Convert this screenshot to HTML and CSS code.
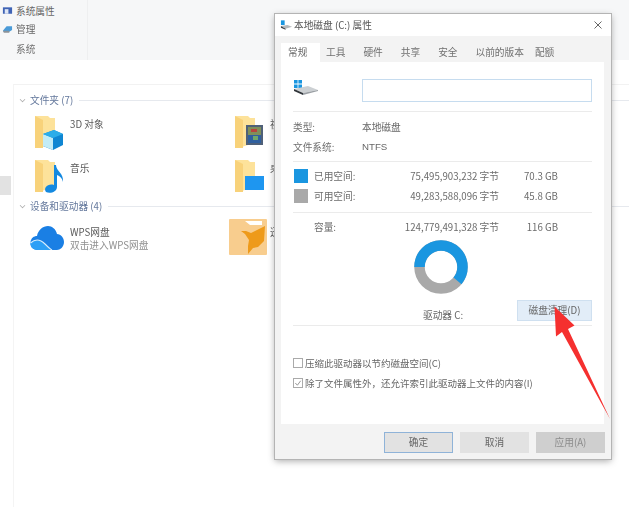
FILE: index.html

```html
<!DOCTYPE html>
<html lang="zh-CN">
<head>
    <meta charset="UTF-8">
    <meta name="viewport" content="width=device-width, initial-scale=1.0">
    <title>本地磁盘 (C:) 属性</title>
    <link rel="stylesheet" href="styles.css">
</head>
<body>
    <div class="screen">
        <!-- 资源管理器 -->
        <div class="ribbon">
            <div class="ribbon-group">
                <div class="ribbon-item">
                    <svg class="ribbon-icon" viewBox="0 0 12 10"><rect x="1" y="1" width="10" height="7" fill="#3f63b5"/><rect x="3" y="3" width="4" height="5" fill="#dfe7f5"/></svg>
                    <span>系统属性</span>
                </div>
                <div class="ribbon-item">
                    <svg class="ribbon-icon" viewBox="0 0 12 10"><path d="M1 7 L5 2 H11 V6 L8 8 H2 Z" fill="#4a9bd8"/><path d="M1 7 H8 V9 H2 Z" fill="#8b9299"/></svg>
                    <span>管理</span>
                </div>
                <div class="ribbon-title">系统</div>
            </div>
        </div>

        <div class="content">
            <div class="group-head">
                <span class="chevron"></span>
                <span class="group-name">文件夹 (7)</span>
                <span class="group-line"></span>
            </div>
            <div class="item-grid">
                <div class="item">
                    <svg class="item-icon" viewBox="0 0 32 36">
                        <path d="M0 1 H13 L15 3 H20 V28 L3 33 H0 Z" fill="#fde29a"/>
                        <path d="M0 1 L8 5 V33 H0 Z" fill="#f8d27a"/>
                        <path d="M8 19 L19 15 L28 19 V30 L18 35 L8 31 Z" fill="#0f86d2"/>
                        <path d="M8 19 L18 23 V35 L8 31 Z" fill="#c3ecf6"/>
                        <path d="M8 19 L19 15 L28 19 L18 23 Z" fill="#2cade9"/>
                    </svg>
                    <span class="item-label">3D 对象</span>
                </div>
                <div class="item">
                    <svg class="item-icon" viewBox="0 0 32 36">
                        <path d="M0 1 H13 L15 3 H20 V28 L3 33 H0 Z" fill="#fde29a"/>
                        <path d="M0 1 L8 5 V33 H0 Z" fill="#f8d27a"/>
                        <rect x="11" y="10" width="17" height="20" fill="#4f6078"/>
                        <rect x="13" y="12" width="13" height="8" fill="#7f8f5a"/>
                        <rect x="16" y="14" width="6" height="3" fill="#b8443c"/>
                        <rect x="13" y="20" width="13" height="8" fill="#2f5f9e"/>
                        <rect x="18" y="21" width="5" height="4" fill="#6fa86a"/>
                    </svg>
                    <span class="item-label">视频</span>
                </div>
                <div class="item">
                    <svg class="item-icon" viewBox="0 0 32 36">
                        <path d="M0 1 H13 L15 3 H20 V28 L3 33 H0 Z" fill="#fde29a"/>
                        <path d="M0 1 L8 5 V33 H0 Z" fill="#f8d27a"/>
                        <path d="M19 6 L21 6 C21 12 29 14 28 23 C27 19 25 17 22 16 V28 C22 33 15 35 11 33 C8 29 13 24 19 26 Z" fill="#1489e0"/>
                    </svg>
                    <span class="item-label">音乐</span>
                </div>
                <div class="item">
                    <svg class="item-icon" viewBox="0 0 32 36">
                        <path d="M0 1 H13 L15 3 H20 V28 L3 33 H0 Z" fill="#fde29a"/>
                        <path d="M0 1 L8 5 V33 H0 Z" fill="#f8d27a"/>
                        <rect x="10" y="17" width="19" height="14" fill="#1e96f0"/>
                    </svg>
                    <span class="item-label">桌面</span>
                </div>
            </div>
            <div class="group-head group-head-drives">
                <span class="chevron"></span>
                <span class="group-name">设备和驱动器 (4)</span>
                <span class="group-line"></span>
            </div>
            <div class="drive-grid">
                <div class="drive">
                    <svg class="cloud-icon" viewBox="0 0 34 25">
                        <path d="M8 25 C2 25 0 20 0.5 17 C1 13 4 11 7 11 C8 5 13 1 18 1 C22 1 26 4 27 9 C31 9 34 13 34 17 C34 22 30 25 27 25 Z" fill="#1a7fe4"/>
                        <path d="M8 25 C2 25 0 21 0.5 18 C6 13 11 15 15 19 C18 22 20 24 22 25 Z" fill="#2c9ff6"/>
                        <path d="M0.5 18 C6 13 11 15 15 19 C18 22 20 24 22 25" fill="none" stroke="#d9eefc" stroke-width="1.1"/>
                    </svg>
                    <div>
                        <div class="drive-name">WPS网盘</div>
                        <div class="drive-sub">双击进入WPS网盘</div>
                    </div>
                </div>
                <div class="drive drive-second">
                    <svg class="bird-icon" viewBox="0 0 38 36">
                        <rect width="38" height="36" rx="1" fill="#f8cd8e"/>
                        <path d="M16 2 H33 V6 H21 Z" fill="#fff"/>
                        <path d="M12 12 L17 12 L22 14 L36 7 L35 22 L29 28 L24 29 L19 35 L19 27 L20 21 L16 15 Z" fill="#ee9a1a"/>
                    </svg>
                    <div class="drive-name">迅雷</div>
                </div>
            </div>
        </div>
        <div class="side-block"></div>

        <!-- 属性窗口 -->
        <div class="dialog">
            <div class="title-bar">
                <svg class="title-icon" viewBox="0 0 14 10">
                    <rect x="1" y="0" width="4" height="5" fill="#1a96e0"/>
                    <path d="M1 6 L8 5 L13 7 L6 9 Z" fill="#b5b9bc"/>
                    <path d="M1 6 L6 9 V10 L1 8 Z" fill="#3a3f44"/>
                </svg>
                <span class="title-text">本地磁盘 (C:) 属性</span>
                <svg class="close-icon" viewBox="0 0 8 8"><path d="M0.5 0.5 L7.5 7.5 M7.5 0.5 L0.5 7.5" stroke="#555" stroke-width="0.9" fill="none"/></svg>
            </div>
            <div class="tabs">
                <span class="tab tab-active">常规</span>
                <span class="tab">工具</span>
                <span class="tab">硬件</span>
                <span class="tab">共享</span>
                <span class="tab">安全</span>
                <span class="tab">以前的版本</span>
                <span class="tab">配额</span>
            </div>
            <div class="panel">
                <div class="name-row">
                    <svg class="drive-icon" viewBox="0 0 24 15">
                        <path d="M0 0 H3.6 V3.6 H0 Z M4.4 0 H8 V3.6 H4.4 Z M0 4.4 H3.6 V8 H0 Z M4.4 4.4 H8 V8 H4.4 Z" fill="#1a96e0"/>
                        <path d="M0 9 L14 6 L24 10 L9 13 Z" fill="#ccd0d3"/>
                        <path d="M0 9 L9 13 V15 L0 11 Z" fill="#30353a"/>
                        <path d="M9 13 L24 10 V11 L9 15 Z" fill="#9a9fa4"/>
                    </svg>
                    <div class="name-input"></div>
                </div>
                <div class="info-rows">
                    <div class="info-row"><span class="info-label">类型:</span><span>本地磁盘</span></div>
                    <div class="info-row"><span class="info-label">文件系统:</span><span class="latin">NTFS</span></div>
                </div>
                <div class="space-rows">
                    <div class="space-row">
                        <span class="swatch swatch-used"></span><span>已用空间:</span>
                        <span class="bytes">75,495,903,232 字节</span><span class="size">70.3 GB</span>
                    </div>
                    <div class="space-row">
                        <span class="swatch swatch-free"></span><span>可用空间:</span>
                        <span class="bytes">49,283,588,096 字节</span><span class="size">45.8 GB</span>
                    </div>
                </div>
                <div class="space-row capacity-row">
                    <span></span><span>容量:</span>
                    <span class="bytes">124,779,491,328 字节</span><span class="size">116 GB</span>
                </div>
                <div class="donut-wrap">
                    <svg class="donut" viewBox="0 0 54 54">
                        <circle cx="27" cy="27" r="21.5" fill="none" stroke="#a9a9a9" stroke-width="10.5"/>
                        <circle cx="27" cy="27" r="21.5" fill="none" stroke="#1a96e0" stroke-width="10.5" stroke-dasharray="82 135.1" transform="rotate(180 27 27)"/>
                    </svg>
                </div>
                <div class="drive-row">
                    <span class="drive-caption">驱动器 C:</span>
                    <span class="clean-button">磁盘清理(D)</span>
                </div>
                <div class="checks">
                    <div class="check-row"><span class="check"></span><span>压缩此驱动器以节约磁盘空间(C)</span></div>
                    <div class="check-row">
                        <span class="check"><svg viewBox="0 0 9 9"><path d="M1.5 4.5 L3.8 7 L7.5 2" fill="none" stroke="#888" stroke-width="1"/></svg></span>
                        <span>除了文件属性外，还允许索引此驱动器上文件的内容(I)</span>
                    </div>
                </div>
            </div>
            <div class="footer">
                <span class="btn btn-default">确定</span>
                <span class="btn">取消</span>
                <span class="btn btn-disabled">应用(A)</span>
            </div>
        </div>

        <!-- 红色箭头 -->
        <svg class="arrow" viewBox="0 0 62 120">
            <path d="M4.5 4.5 L24.5 23.5 L18 27 L60 117 L12 30 L6 34.5 Z" fill="#f5302f"/>
        </svg>
    </div>
</body>
</html>
```

FILE: styles.css

```css
html, body {
    margin: 0;
    padding: 0;
    background: #fff;
}

.screen {
    position: relative;
    width: 629px;
    height: 507px;
    overflow: hidden;
    font-family: "Noto Sans CJK SC", "Liberation Sans", sans-serif;
    font-size: 9.7px;
    color: #666;
    filter: blur(0.5px);
}

.latin {
    font-family: "Liberation Sans", sans-serif;
}

/* ribbon */
.ribbon {
    height: 60px;
    background: #f6f7f8;
}

.ribbon-group {
    width: 88px;
    height: 60px;
    box-sizing: border-box;
    padding-top: 2px;
    border-right: 1px solid #eeeff0;
}

.ribbon-item {
    display: flex;
    align-items: center;
    gap: 3px;
    height: 18px;
    padding-left: 2px;
}

.ribbon-icon {
    width: 11px;
    height: 10px;
}

.ribbon-title {
    padding-left: 16px;
    margin-top: 3px;
    line-height: 16px;
    color: #707070;
}

/* explorer */
.content {
    margin: 24px 0 0 13px;
    height: 423px;
    box-sizing: border-box;
    border-top: 1px solid #f2f2f2;
    border-left: 1px solid #f4f4f4;
    padding-left: 5px;
}

.group-head {
    display: flex;
    align-items: center;
    height: 16px;
    margin-top: 7px;
    color: #64789c;
}

.group-head-drives {
    margin-top: -5px;
}

.chevron {
    width: 4px;
    height: 4px;
    margin: -2px 5px 0 1px;
    border-right: 1px solid #aaa;
    border-bottom: 1px solid #aaa;
    transform: rotate(45deg) scale(0.8);
}

.group-line {
    flex: 1;
    height: 1px;
    margin-left: 6px;
    background: #e6e9ee;
}

.item-grid {
    display: grid;
    grid-template-columns: 200px 200px;
    grid-auto-rows: 44px;
    margin: 7px 0 0 16px;
}

.item {
    display: flex;
    gap: 3px;
    color: #5a5a5a;
}

.item-icon {
    width: 32px;
    height: 36px;
}

.item-label {
    line-height: 16px;
    margin-top: 1px;
}

.drive-grid {
    display: grid;
    grid-template-columns: 199px 200px;
    margin: 5px 0 0 11px;
}

.drive {
    display: flex;
    align-items: flex-start;
    gap: 6px;
}

.drive-second {
    gap: 3px;
}

.cloud-icon {
    width: 34px;
    height: 25px;
    margin-top: 6px;
}

.bird-icon {
    width: 38px;
    height: 36px;
}

.drive-name {
    margin-top: 6px;
    line-height: 14px;
    color: #5a5a5a;
}

.drive-sub {
    line-height: 13px;
    color: #909090;
}

.side-block {
    position: absolute;
    left: 0;
    top: 176px;
    width: 11px;
    height: 19px;
    background: #e2e2e2;
}

/* dialog */
.dialog {
    position: absolute;
    left: 275px;
    top: 14px;
    width: 336px;
    height: 445px;
    background: #f3f3f3;
    box-shadow: 0 0 0 1px #b4b4b4, 0 2px 7px rgba(0, 0, 0, 0.35);
}

.title-bar {
    display: flex;
    align-items: center;
    height: 22px;
    padding: 0 9px 0 5px;
    background: #fff;
}

.title-icon {
    width: 13px;
    height: 10px;
    margin-right: 1px;
}

.title-text {
    flex: 1;
    color: #555;
}

.close-icon {
    width: 8px;
    height: 8px;
}

.tabs {
    display: flex;
    height: 19px;
    margin-top: 7px;
    padding-left: 6px;
}

.tab {
    padding: 0 6px;
    margin-right: 6px;
    line-height: 19px;
    color: #707070;
}

.tab:nth-child(6) {
    margin-right: -1px;
}

.tab-active {
    width: 26px;
    padding: 0 6px 0 7px;
    margin-right: 0;
    background: #fff;
    color: #666;
}

.panel {
    height: 362px;
    box-sizing: border-box;
    margin: 0 7px 0 6px;
    padding: 0 12px;
    background: #fff;
}

.name-row {
    display: flex;
    gap: 44px;
    align-items: center;
    height: 50px;
    box-sizing: border-box;
    border-bottom: 1px solid #ebebeb;
}

.drive-icon {
    width: 24px;
    height: 15px;
    margin: 2px 0 0 1px;
}

.name-input {
    flex: 1;
    height: 21px;
    margin-top: 8px;
    border: 1px solid #c6dcef;
}

.info-rows {
    padding: 5px 0 4px;
    border-bottom: 1px solid #ebebeb;
}

.info-row {
    display: flex;
    height: 20px;
    line-height: 20px;
}

.info-label {
    width: 69px;
    color: #707070;
}

.space-rows {
    padding: 4px 0 6px;
    border-bottom: 1px solid #ebebeb;
}

.space-row {
    display: grid;
    grid-template-columns: 21px 59px 126px 59px;
    align-items: center;
    height: 20px;
    line-height: 20px;
    color: #6c6c6c;
}

.bytes, .size {
    text-align: right;
    white-space: nowrap;
}

.swatch {
    width: 14px;
    height: 14px;
    margin-left: 1px;
}

.swatch-used {
    background: #1a96e0;
}

.swatch-free {
    background: #a9a9a9;
}

.capacity-row {
    margin-top: 4px;
}

.donut-wrap {
    display: flex;
    justify-content: center;
    height: 55px;
    margin-top: 3px;
    padding-right: 3px;
}

.donut {
    width: 54px;
    height: 54px;
}

.drive-row {
    display: flex;
    align-items: flex-end;
    height: 27px;
    padding-bottom: 4px;
    margin-top: -1px;
    border-bottom: 1px solid #ebebeb;
}

.drive-caption {
    margin-left: 130px;
    line-height: 14px;
    margin-bottom: -1px;
}

.clean-button {
    width: 73px;
    height: 19px;
    margin-left: auto;
    line-height: 19px;
    text-align: center;
    background: #e2edf8;
    border: 1px solid #cfe0f0;
}

.checks {
    margin-top: 27px;
    font-size: 9.5px;
}

.check-row {
    display: flex;
    align-items: center;
    gap: 2px;
    height: 20px;
}

.check {
    display: flex;
    width: 8px;
    height: 8px;
    border: 1px solid #aaa;
}

.footer {
    display: flex;
    justify-content: flex-end;
    gap: 7px;
    padding: 8px 6px 0 0;
}

.btn {
    width: 69px;
    height: 21px;
    line-height: 21px;
    text-align: center;
    background: #e2e2e2;
}

.btn-default {
    box-sizing: border-box;
    line-height: 19px;
    border: 1px solid #8fb3d8;
}

.btn-disabled {
    background: #cfcfcf;
    color: #8c8c8c;
}

/* annotation over the dialog */
.arrow {
    position: absolute;
    left: 550px;
    top: 302px;
    width: 62px;
    height: 120px;
}
```
